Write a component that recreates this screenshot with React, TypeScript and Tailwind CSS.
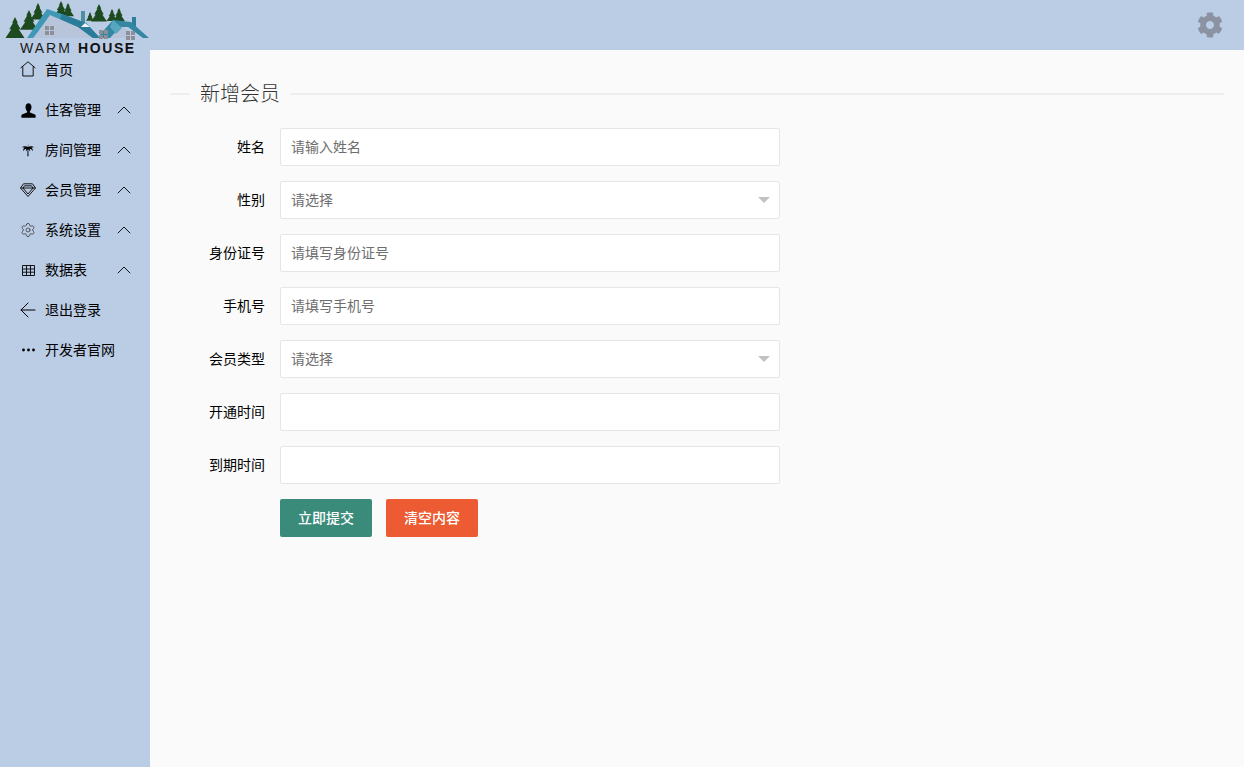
import { ReactNode } from 'react';
import { ArrowLeft, ChevronUp, Settings } from 'lucide-react';
import { FaCog } from 'react-icons/fa';

const font = { fontFamily: '"Noto Sans CJK SC", "Noto Sans", sans-serif' };

function Tree({ x, y, s = 1 }: { x: number; y: number; s?: number }) {
  return (
    <polygon
      fill="#1d4a1f"
      points={`${x},${y} ${x + 3 * s},${y + 6 * s} ${x + 2 * s},${y + 6 * s} ${x + 6 * s},${y + 13 * s} ${x + 4 * s},${y + 13 * s} ${x + 10 * s},${y + 22 * s} ${x - 10 * s},${y + 22 * s} ${x - 4 * s},${y + 13 * s} ${x - 6 * s},${y + 13 * s} ${x - 2 * s},${y + 6 * s} ${x - 3 * s},${y + 6 * s}`}
    />
  );
}

function Win({ x, y }: { x: number; y: number }) {
  return (
    <g fill="#8c8f98">
      <rect x={x} y={y} width="4" height="4" />
      <rect x={x + 5} y={y} width="4" height="4" />
      <rect x={x} y={y + 5} width="4" height="4" />
      <rect x={x + 5} y={y + 5} width="4" height="4" />
    </g>
  );
}

function Logo() {
  return (
    <svg className="absolute left-0 top-0 z-10" width="150" height="55" viewBox="0 0 150 55">
      <Tree x={15} y={17} s={0.95} />
      <Tree x={29} y={10} s={0.9} />
      <Tree x={38} y={3} s={0.75} />
      <Tree x={61} y={1} s={0.7} />
      <Tree x={68} y={3} s={0.6} />
      <Tree x={90} y={12} s={0.4} />
      <Tree x={99} y={4} s={0.8} />
      <Tree x={112} y={9} s={0.55} />
      <Tree x={119} y={8} s={0.6} />
      <rect x="81" y="11" width="4" height="13" fill="#4d8ea3" />
      <rect x="132" y="17" width="4" height="10" fill="#2f7f9c" />
      <polygon fill="#b8c4d9" points="32,38 48,14 76,24 96,38" />
      <polygon fill="#b8c4d9" points="104,38 114,26 124,26 134,38" />
      <polygon fill="#3f98b5" points="47,9 62,14 86,23 100,38 93,38 78,27 50,15 37,33 33,38 27,38" />
      <polygon fill="#2b7c98" points="62,14 86,23 100,38 93,38 78,27 60,19" />
      <polygon fill="#3487a3" points="97,38 113,20 131,22 149,38 143,38 128,27 120,27 110,38" />
      <polygon fill="#57a8bf" points="113,20 122,28 116,34 110,27" />
      <polygon fill="#f2f5fa" points="81,27 85,23 90,27" />
      <Win x={45} y={26} />
      <Win x={99} y={30} />
      <Win x={126} y={31} />
      <text x="20" y="52.500" fontSize="14" fill="#1a1a1a" fontFamily="Liberation Sans" letterSpacing="2">
        WARM
      </text>
      <text x="78" y="52.500" fontSize="14" fontWeight="700" fill="#111" fontFamily="Liberation Sans" letterSpacing="1.6">
        HOUSE
      </text>
    </svg>
  );
}

const menu: { label: string; icon: ReactNode; arrow?: boolean }[] = [
  {
    label: '首页',
    icon: (
      <svg viewBox="0 0 16 16" className="w-4 h-4 -translate-y-px text-black" fill="none" stroke="currentColor" strokeWidth="0.9">
        <path d="M0.6 7 8 0.8 15.400 7M2.800 5.400V15h10.400V5.400" />
      </svg>
    ),
  },
  {
    label: '住客管理',
    arrow: true,
    icon: (
      <svg viewBox="0 0 16 16" className="w-[15px] h-[15px] text-black" fill="currentColor">
        <path d="M4.800 4.200C4.800 1.800 6.200.3 8 .3s3.200 1.500 3.200 3.900c0 2-.8 3.700-1.700 4.600-.3.700 0 1.300.8 1.700l4.600 1.800c.5.300.7.700.7 1.300v2H.4v-2c0-.6.2-1 .7-1.300l4.600-1.800c.8-.4 1.100-1 .8-1.700C5.600 7.900 4.800 6.200 4.800 4.200z" />
      </svg>
    ),
  },
  {
    label: '房间管理',
    arrow: true,
    icon: (
      <svg viewBox="0 0 16 16" className="w-[14px] h-[14px] text-black" fill="currentColor">
        <path d="M7.700 4.600C6 3.300 3 3.200.6 5c1.500-.2 2.800 0 3.700.5C3 6.200 2.300 7.500 2.400 9.300c1-1.500 2.200-2.400 3.800-2.800-.6 1-.8 2-.5 3.300.5-1.200 1.100-2 1.800-2.600L7.300 15h1.300l-.2-7.800c.8.600 1.400 1.400 1.900 2.600.3-1.300.1-2.300-.5-3.300 1.600.4 2.800 1.300 3.800 2.800.1-1.800-.6-3.100-1.900-3.800.9-.5 2.200-.7 3.700-.5-2.400-1.800-5.400-1.700-7.100-.4C8 3.500 8.200 2.500 8.800 1.500 8 2 7.800 3.200 7.700 4.600z" />
      </svg>
    ),
  },
  {
    label: '会员管理',
    arrow: true,
    icon: (
      <svg viewBox="0 0 16 16" className="w-4 h-4 text-black" fill="none" stroke="currentColor" strokeWidth="0.9" strokeLinejoin="round">
        <path d="M3.500 1.800h9L15.500 6 8 14.500.5 6zM.5 6h15M4.500 3.800h7L13 6l-5 6-5-6z" />
      </svg>
    ),
  },
  { label: '系统设置', arrow: true, icon: <Settings className="w-4 h-4 text-[#222]" strokeWidth={1} /> },
  {
    label: '数据表',
    arrow: true,
    icon: (
      <svg viewBox="0 0 13 11" className="w-[13px] h-[11px] text-black" fill="none" stroke="currentColor" strokeWidth="0.9">
        <path d="M.5.5h12v10H.5zM.5 4h12M.5 7.200h12M4.500.5V10.500M8.500.5V10.500" />
      </svg>
    ),
  },
  { label: '退出登录', icon: <ArrowLeft className="w-6 h-6 shrink-0 text-black" strokeWidth={1} /> },
  {
    label: '开发者官网',
    icon: (
      <svg viewBox="0 0 13 4" className="w-[13px] h-1 text-black" fill="currentColor">
        <circle cx="1.500" cy="2" r="1.400" />
        <circle cx="6.500" cy="2" r="1.400" />
        <circle cx="11.500" cy="2" r="1.400" />
      </svg>
    ),
  },
];

const fields = [
  { label: '姓名', placeholder: '请输入姓名' },
  { label: '性别', placeholder: '请选择', select: true },
  { label: '身份证号', placeholder: '请填写身份证号' },
  { label: '手机号', placeholder: '请填写手机号' },
  { label: '会员类型', placeholder: '请选择', select: true },
  { label: '开通时间', placeholder: '' },
  { label: '到期时间', placeholder: '' },
];

export default function App() {
  return (
    <div className="relative flex flex-col h-[767px] w-[1244px] overflow-hidden bg-[#bbcce5] text-sm" style={font}>
      <Logo />
      {/* Header */}
      <header className="flex h-[50px] shrink-0 items-center justify-end pr-[21px] bg-[#bbcce5]">
        <FaCog className="w-[26px] h-[26px] text-[#8b92a2]" />
      </header>

      <div className="flex flex-1 min-h-0">
        {/* Sidebar */}
        <nav className="w-[150px] shrink-0">
          {menu.map((item) => (
            <div key={item.label} className="flex h-10 items-center">
              <span className="flex w-[45px] shrink-0 items-center justify-center pl-[11px]">{item.icon}</span>
              <span className="pb-0.5 text-sm text-black">{item.label}</span>
              {item.arrow && (
                <ChevronUp className="ml-auto mr-[14px] w-6 h-6 text-black" strokeWidth={0.9} />
              )}
            </div>
          ))}
        </nav>

        {/* Content */}
        <main className="flex-1 bg-[#fafafa] px-5 pt-[28px]">
          <fieldset className="border-0 border-t-2 border-[#eeeeee]">
            <legend className="ml-5 px-2.5 pb-0.5 text-xl font-light leading-[30px] text-[#333]">新增会员</legend>
            <form className="mt-[18px] flex flex-col gap-[15px]">
              {fields.map((f) => (
                <div key={f.label} className="flex items-center">
                  <label className="w-[110px] pb-0.5 pr-[15px] text-right text-sm text-black">{f.label}</label>
                  <div className="relative w-[500px]">
                    <input
                      readOnly={f.select}
                      placeholder={f.placeholder}
                      className="h-[38px] w-full rounded-[2px] border border-[#e6e6e6] bg-white pb-0.5 pl-2.5 text-sm text-[#666] placeholder:text-[#6e6e6e] outline-none"
                    />
                    {f.select && (
                      <span className="absolute right-[10px] top-4 border-x-[6px] border-t-[6px] border-x-transparent border-t-[#c2c2c2]" />
                    )}
                  </div>
                </div>
              ))}
              <div className="flex gap-[14px] pl-[110px]">
                <button type="button" className="h-[38px] w-[92px] rounded-[2px] bg-[#3b8b7b] pb-0.5 text-sm font-medium text-white">
                  立即提交
                </button>
                <button type="button" className="h-[38px] w-[92px] rounded-[2px] bg-[#ec5b32] pb-0.5 text-sm font-medium text-white">
                  清空内容
                </button>
              </div>
            </form>
          </fieldset>
        </main>
      </div>
    </div>
  );
}
